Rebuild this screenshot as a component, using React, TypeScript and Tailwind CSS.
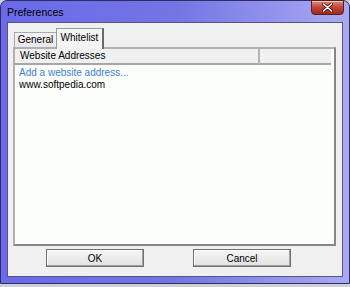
import React from 'react';

const font = { fontFamily: '"Liberation Sans", Arial, sans-serif' };

function CloseButton() {
  return (
    <div className="mr-[5px] -mt-[1px] h-[15px] w-[33px] rounded-b-[4px] border border-[#5a1e1a] bg-gradient-to-b from-[#d98c80] via-[#c2423a] to-[#9e2a1c] flex items-center justify-center shadow-[inset_0_1px_0_rgba(255,255,255,0.5)]">
      <svg width="11" height="9" viewBox="0 0 11 9">
        <path d="M1.5 1 L9.5 8 M9.5 1 L1.5 8" stroke="#3a1010" strokeWidth="3" strokeLinecap="round" />
        <path d="M1.5 1 L9.5 8 M9.5 1 L1.5 8" stroke="#ffffff" strokeWidth="1.6" strokeLinecap="round" />
      </svg>
    </div>
  );
}

function Button({ label }: { label: string }) {
  return (
    <div className="h-[18px] w-[98px] border border-[#707070] bg-gradient-to-b from-[#f6f6f6] to-[#e2e2e2] shadow-[inset_-1px_-1px_0_#a0a0a0,inset_1px_1px_0_#ffffff] flex items-center justify-center text-[10px] text-black">
      {label}
    </div>
  );
}

export default function App() {
  return (
    <div className="w-[350px] h-[287px] bg-[#cfcfd6] overflow-hidden" style={font}>
      {/* window frame */}
      <div className="h-[284px] w-full rounded-t-[7px] border border-[#2e2e66] bg-gradient-to-r from-[#6a6aea] via-[#7474e4] to-[#aaaaf2] flex flex-col">
        {/* title bar */}
        <div className="h-[21px] flex items-start justify-between">
          <div className="pl-[6px] pt-[5px] text-[10.5px] leading-[12px] text-black">Preferences</div>
          <CloseButton />
        </div>

        {/* client area */}
        <div className="mx-[6px] h-[255px] border border-[#55557e] bg-[#f0f0f0] flex flex-col">
          {/* tabs */}
          <div className="h-[24px] flex items-end pl-[6px]">
            <div className="h-[15px] w-[43px] border border-b-0 border-[#a8a8b0] bg-gradient-to-b from-[#f4f4f4] to-[#e8e8e8] flex items-center justify-center text-[10px] leading-[12px] text-black -mr-[1px]">
              General
            </div>
            <div className="relative z-10 -mb-[2px] h-[21px] w-[48px] border border-b-0 border-[#9a9aa2] border-r-2 border-r-[#6a6a6a] bg-[#f4f4f4] flex items-start justify-center pt-[3px] text-[10px] leading-[12px] text-black">
              Whitelist
            </div>
          </div>

          {/* panel / list view */}
          <div className="ml-[5px] mr-[6px] h-[199px] border-2 border-l-[#b0b0b0] border-t-[#b0b0b0] border-r-[#868686] border-b-[#868686] bg-[#fcfefc] flex flex-col">
            <div className="h-[16px] flex">
              <div className="w-[245px] h-full border-r-2 border-b-2 border-r-[#b4b4b4] border-b-[#a6a6a6] bg-[#f0f0f0] pl-[5px] flex items-center text-[10px] leading-[12px] text-black">
                Website Addresses
              </div>
              <div className="w-[71px] h-full border-b-2 border-b-[#a6a6a6] bg-[#f0f0f0]" />
            </div>
            <div className="pl-[4px] pt-[2px] text-[10px] leading-[12px] text-[#3c7fd8]">Add a website address...</div>
            <div className="pl-[4px] pt-[0px] text-[10px] leading-[12px] text-black">www.softpedia.com</div>
          </div>

          {/* buttons */}
          <div className="mt-[3px] flex pl-[38px] gap-[49px]">
            <Button label="OK" />
            <Button label="Cancel" />
          </div>
        </div>
      </div>
    </div>
  );
}
